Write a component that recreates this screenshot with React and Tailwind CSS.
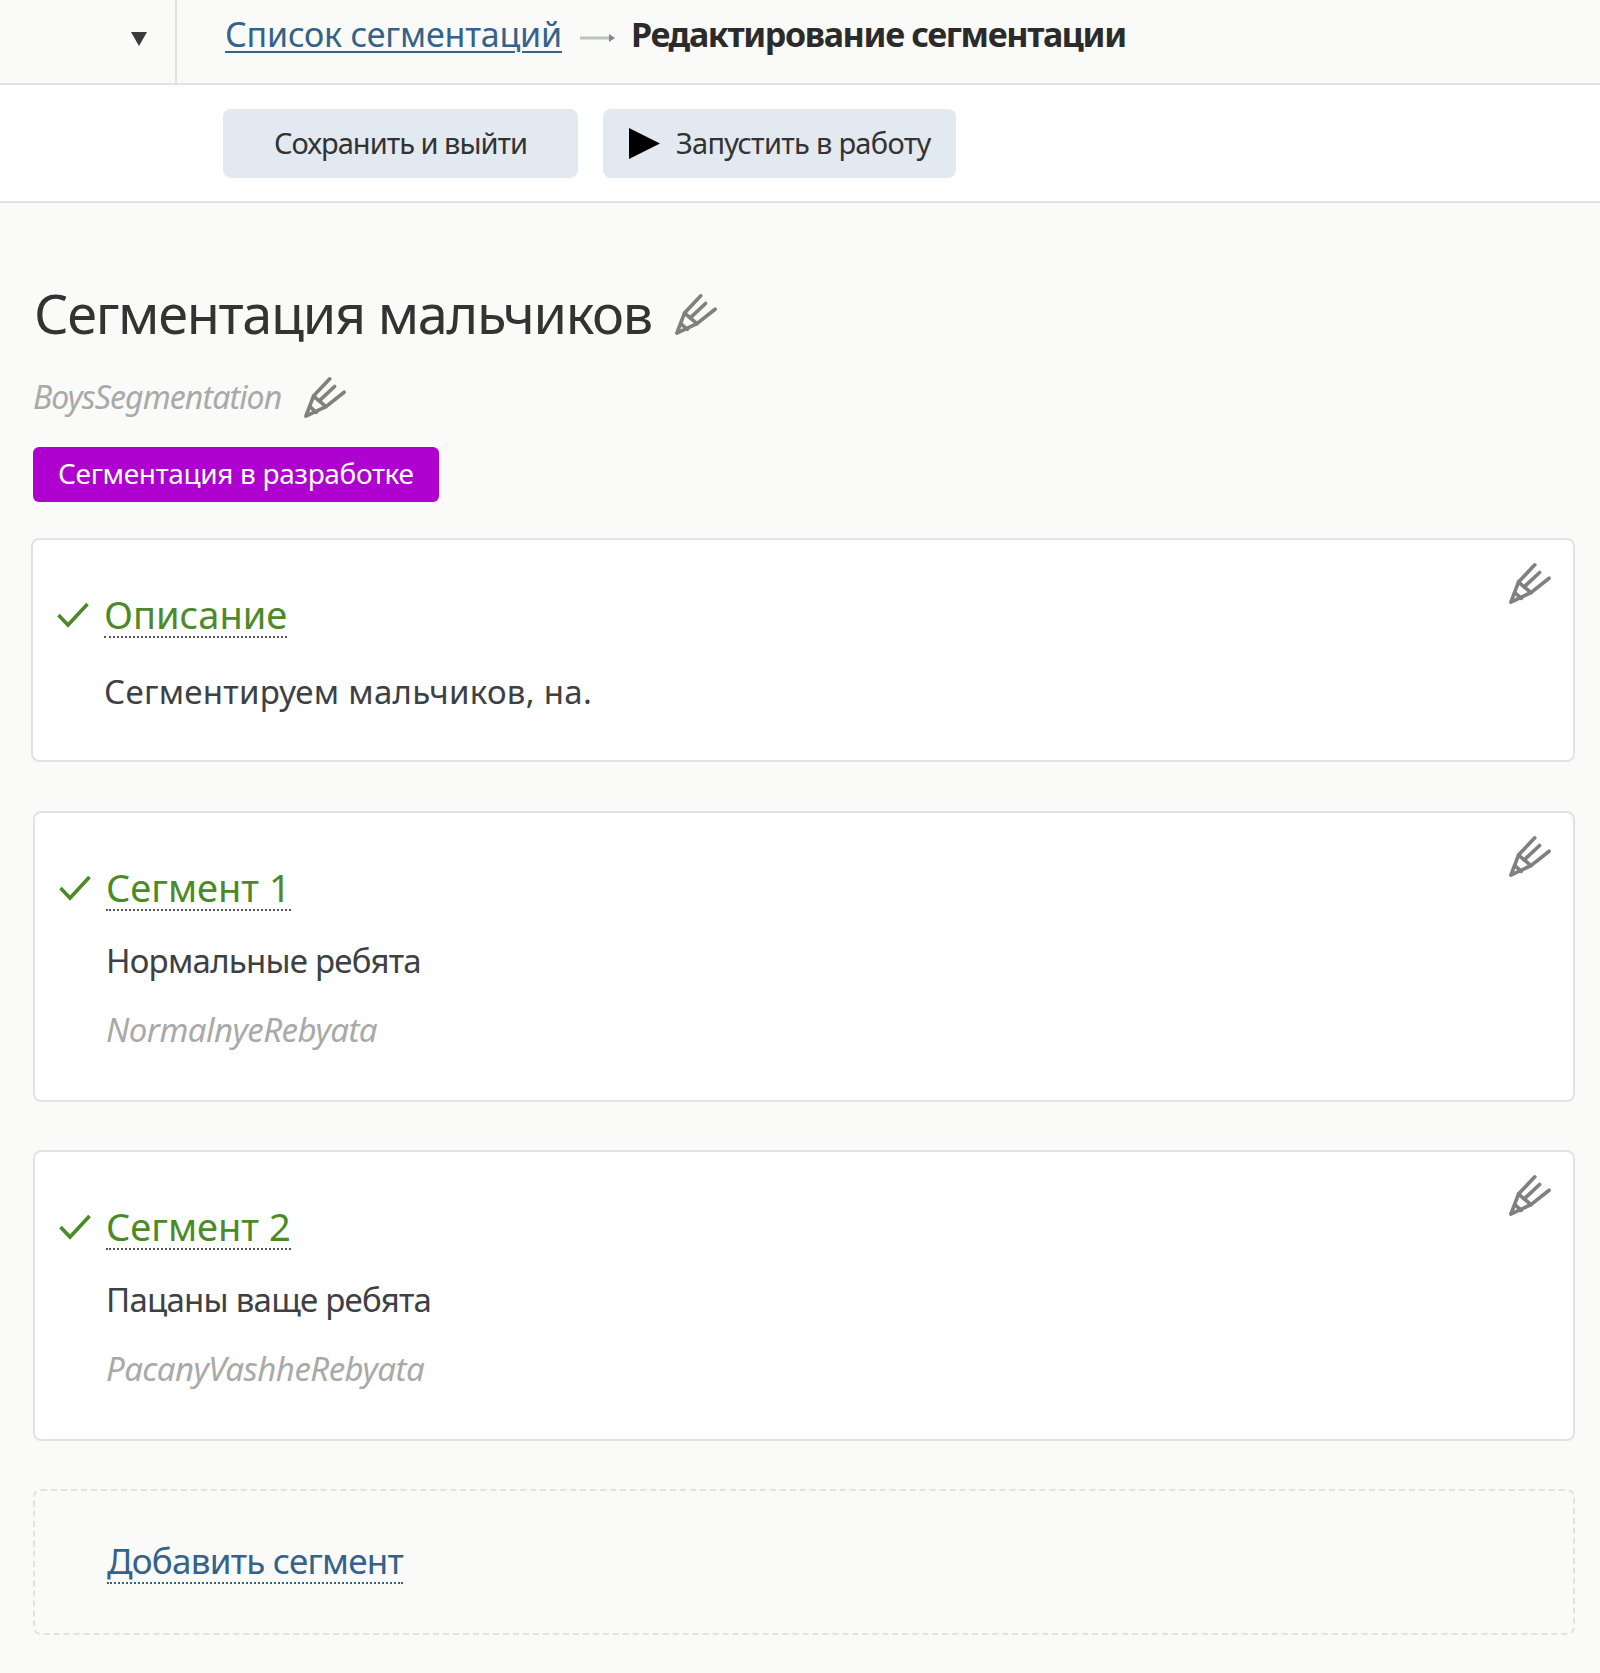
import React from 'react';

const Pencil = ({ className = '' }) => (
  <svg viewBox="0 0 46 46" fill="none" stroke="#808080" strokeWidth="3.8" strokeLinecap="round" strokeLinejoin="round" className={className}>
    <path d="M3 43 L11 22 L24 33 Z" />
    <path d="M7 33 L14 39" />
    <path d="M11 22 L28 4" />
    <path d="M17 27 L33 12" />
    <path d="M24 33 L43 18" />
  </svg>
);

const Check = () => (
  <svg viewBox="0 0 32 26" fill="none" stroke="#4b8a27" strokeWidth="3.6" className="w-8 h-[26px] shrink-0">
    <path d="M1.5 13 L11 23 L30.5 2" />
  </svg>
);

const SegmentCard = ({ title, text, slug, className = '', textClass = '' }) => (
  <div className={`relative bg-white border-2 border-[#e2e2e2] rounded-lg pl-[24px] ${className}`}>
    <Pencil className="absolute top-[21px] right-[21px] w-[44px] h-[44px]" />
    <div className="flex items-center gap-[15px] pt-[52px]">
      <Check />
      <span className="text-[38px] leading-[44px] text-[#4b8a27] border-b-2 border-dotted border-[#555]">{title}</span>
    </div>
    <div className={`pl-[47px] text-[33px] leading-[48px] text-[#3d4045] ${textClass}`}>{text}</div>
    {slug && <div className="pl-[47px] mt-[21px] text-[33px] leading-[48px] italic tracking-[-0.55px] text-[#a9a9a9]">{slug}</div>}
  </div>
);

export default function App() {
  return (
    <div className="min-h-[1673px] bg-[#fafaf8] font-['Noto_Sans','Liberation_Sans',sans-serif] text-[#333]">
      <div className="flex h-[85px] border-b-2 border-[#e2e2e2]">
        <div className="flex items-center justify-end w-[177px] pr-[28px] pb-[6px] border-r-2 border-[#e2e2e2]">
          <svg viewBox="0 0 16 14" className="w-4 h-[14px]"><path d="M0 0 H16 L8 14 Z" fill="#3a3a3a" /></svg>
        </div>
        <div className="flex items-center pl-[48px] pb-[14px] text-[34px]">
          <a className="text-[#34628a] tracking-[-0.2px] underline decoration-2 underline-offset-4">Список сегментаций</a>
          <svg viewBox="0 0 36 12" className="w-9 h-3 ml-[18px] mr-[15px] mt-[6px]">
            <path d="M0 6 H30" stroke="#b9c6c0" strokeWidth="3" />
            <path d="M29 2 L35 6 L29 10 Z" fill="#7d8a90" />
          </svg>
          <span className="font-bold tracking-[-1.35px] text-[#2b2b2b]">Редактирование сегментации</span>
        </div>
      </div>

      <div className="flex gap-[25px] h-[118px] pt-[24px] pl-[223px] bg-white border-b-2 border-[#e2e2e2]">
        <button className="w-[355px] h-[69px] pb-[2px] rounded-lg bg-[#e2e9f0] text-[29px] tracking-[-1px] text-[#333]">Сохранить и выйти</button>
        <button className="flex items-center w-[353px] h-[69px] pb-[2px] pl-[26px] gap-[16px] rounded-lg bg-[#e2e9f0] text-[29px] tracking-[-0.7px] text-[#333]">
          <svg viewBox="0 0 30 30" className="w-[31px] h-[31px] mt-[2px]"><path d="M0 0 L30 15 L0 30 Z" fill="#000" /></svg>
          Запустить в работу
        </button>
      </div>

      <div className="pl-[31px] pr-[25px]">
        <div className="flex items-center gap-[22px] mt-[75px] pl-[3px]">
          <h1 className="text-[54px] leading-[70px] font-normal tracking-[-1.3px] text-[#333]">Сегментация мальчиков</h1>
          <Pencil className="w-[44px] h-[44px] mt-[2px]" />
        </div>
        <div className="flex items-center gap-[22px] mt-[25px] pl-[2px]">
          <span className="text-[32px] leading-[48px] italic tracking-[-0.9px] text-[#a9a9a9]">BoysSegmentation</span>
          <Pencil className="w-[44px] h-[44px]" />
        </div>
        <div className="inline-flex items-center h-[55px] mt-[26px] ml-[2px] pb-[3px] px-[25px] rounded-md bg-[#ae00cf] text-white text-[28px] tracking-[-0.35px]">Сегментация в разработке</div>

        <SegmentCard className="mt-[36px] h-[224px]" textClass="mt-[30px] tracking-[0.3px]" title="Описание" text="Сегментируем мальчиков, на." />
        <SegmentCard className="mt-[49px] ml-[2px] h-[291px]" textClass="mt-[26px] tracking-[-0.75px]" title="Сегмент 1" text="Нормальные ребята" slug="NormalnyeRebyata" />
        <SegmentCard className="mt-[48px] ml-[2px] h-[291px]" textClass="mt-[26px] tracking-[-0.75px]" title="Сегмент 2" text="Пацаны ваще ребята" slug="PacanyVashheRebyata" />

        <div className="mt-[48px] ml-[2px] h-[146px] flex items-center pl-[72px] border-2 border-dashed border-[#e2e2e2] rounded-lg">
          <a className="text-[35px] leading-[42px] tracking-[-0.75px] text-[#34628a] border-b-2 border-dotted border-[#34628a]">Добавить сегмент</a>
        </div>
      </div>
    </div>
  );
}
